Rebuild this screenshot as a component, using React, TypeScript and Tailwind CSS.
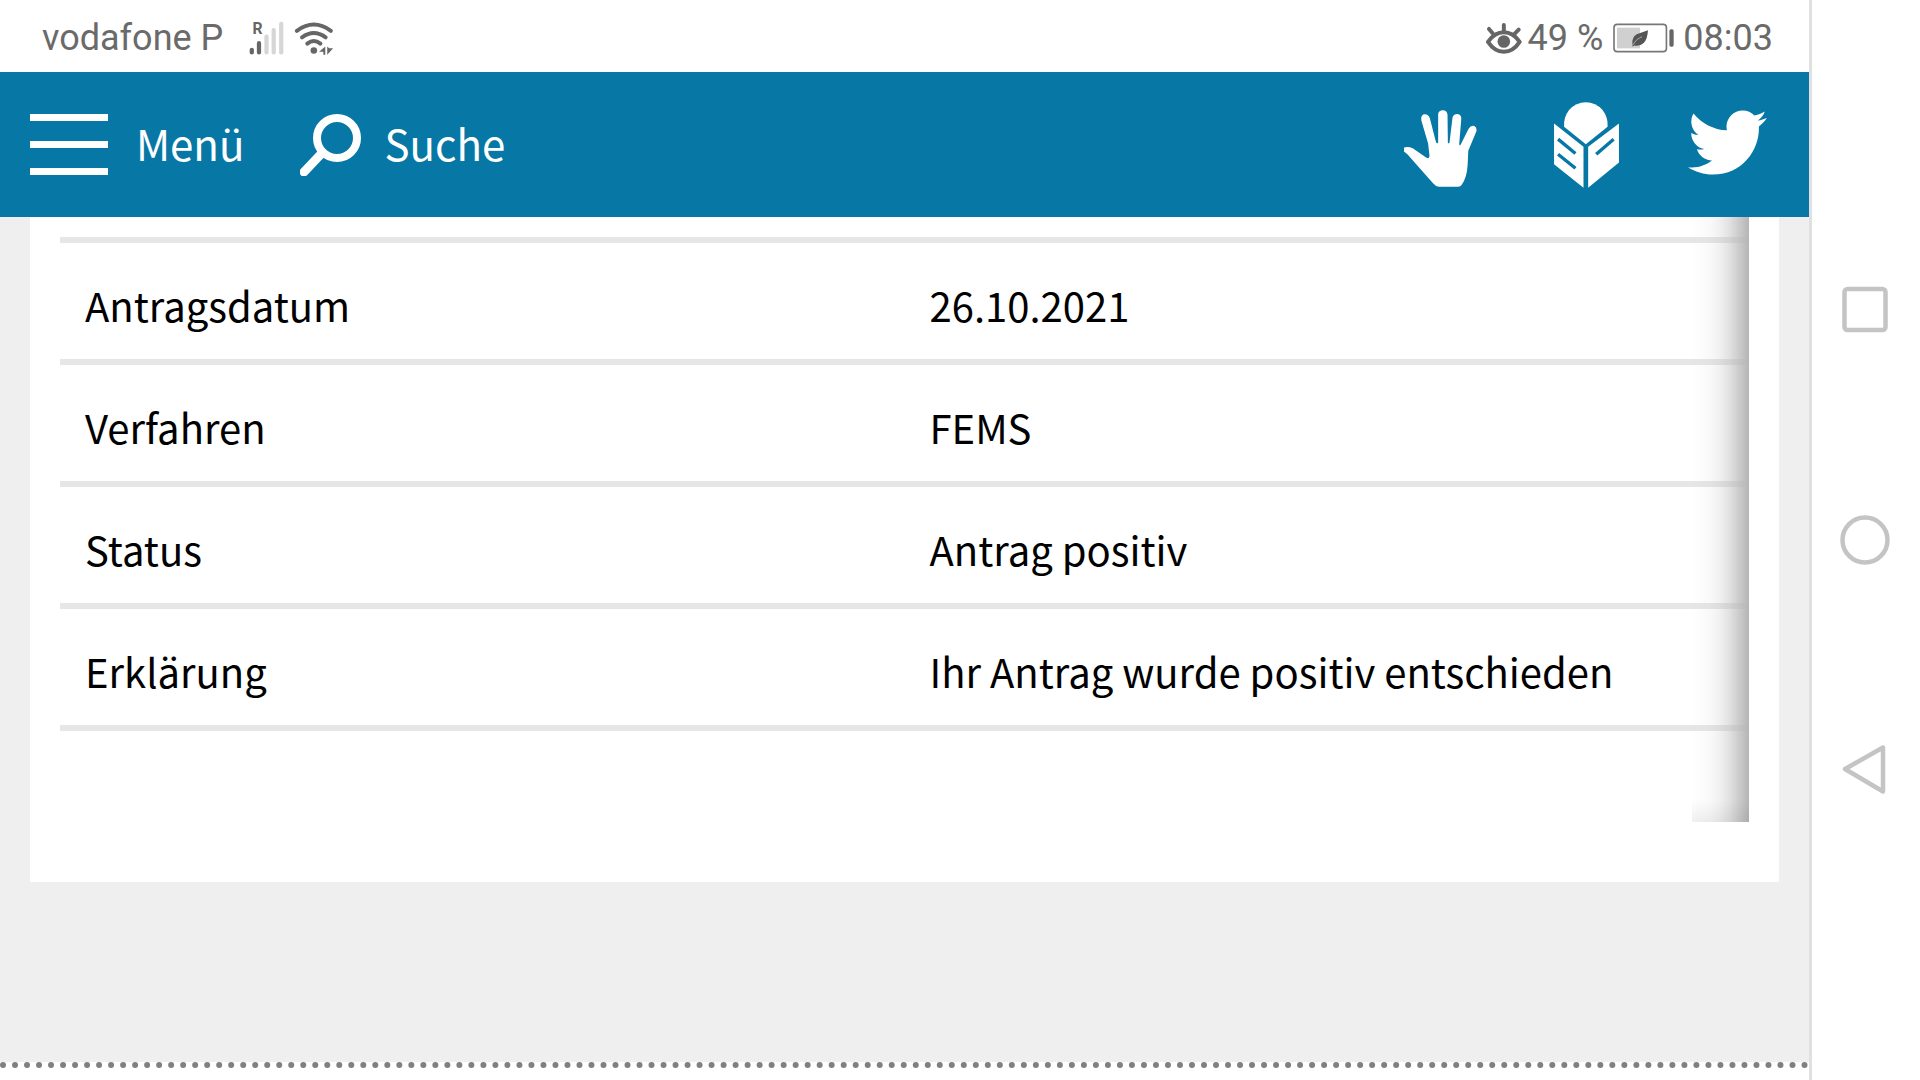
import React from 'react';
import { FaTwitter } from 'react-icons/fa';

interface Row {
  label: string;
  value: string;
}

const rows: Row[] = [
  { label: 'Antragsdatum', value: '26.10.2021' },
  { label: 'Verfahren', value: 'FEMS' },
  { label: 'Status', value: 'Antrag positiv' },
  { label: 'Erklärung', value: 'Ihr Antrag wurde positiv entschieden' },
];

function SignalIcon() {
  return (
    <svg viewBox="747 54 106 104" className="w-[35px] h-[34px] overflow-visible" strokeWidth="13" strokeLinecap="round" aria-hidden="true">
      <text x="757" y="93" fontSize="48" fontWeight="700" fill="#666" stroke="none">R</text>
      <path d="M755 142v8M777 122v28" stroke="#666" />
      <path d="M800 102v48M822 82v68M845 63v87" stroke="#d6d6d6" />
    </svg>
  );
}

function WifiIcon() {
  return (
    <svg viewBox="881 54 119 104" className="w-[40px] h-[34px]" fill="none" stroke="#666" strokeWidth="12" strokeLinecap="round" aria-hidden="true">
      <path d="M888 84Q940 46 992 84M904 104Q940 78 976 104M920 123Q940 108 960 123" />
      <circle cx="940" cy="144" r="10" fill="#666" stroke="none" />
      <path d="M956 148l19-16v25h-6v-9zM981 157v-25l6 5h12z" fill="#666" stroke="none" />
    </svg>
  );
}

function EyeIcon() {
  return (
    <svg viewBox="78 61 109 98" className="w-[36px] h-[33px]" fill="none" stroke="#666" strokeWidth="12" strokeLinecap="round" aria-hidden="true">
      <path d="M84 120Q104 91 132 91Q160 91 180 120Q160 150 132 150Q104 150 84 120Z" strokeWidth="12" strokeLinejoin="round" />
      <circle cx="132" cy="119" r="19" fill="#666" stroke="none" />
      <path d="M132 69v18M87 81l11 13M177 83l-12 12" />
    </svg>
  );
}

function BatteryIcon() {
  return (
    <svg viewBox="458 64 186 91" className="w-[62px] h-[30px]" aria-hidden="true">
      <rect x="460" y="68" width="159" height="83" rx="10" fill="none" stroke="#777" strokeWidth="5" />
      <rect x="469" y="78" width="70" height="63" fill="#d0d0d0" />
      <rect x="628" y="83" width="13" height="53" rx="5" fill="#666" />
      <path d="M563 86Q562 112 550 125Q538 136 521 132L516 136V128Q513 108 529 98Q546 92 563 86Z" fill="#555" />
      <path d="M517 131Q526 112 545 105" fill="none" stroke="#ccc" strokeWidth="2" />
    </svg>
  );
}

function SearchIcon() {
  return (
    <svg viewBox="0 0 61 62" className="w-[61px] h-[62px]" fill="none" stroke="white" aria-hidden="true">
      <circle cx="37" cy="24" r="20" strokeWidth="8" />
      <path d="M22 39L4 58" strokeWidth="9" strokeLinecap="round" />
    </svg>
  );
}

function HandIcon() {
  return (
    <svg viewBox="72 60 218 230" className="w-[73px] h-[77px]" fill="white" aria-hidden="true">
      <path d="M72 172Q84 168 98 174L138 202Q148 208 148 195L144 160L124 92Q121 74 134 73Q145 74 149 84L166 150Q169 162 174 158L174 72Q176 61 188 61Q200 61 202 74L203 158Q206 162 208 156L217 82Q220 72 232 72Q244 74 243 88L237 160Q237 172 243 160L265 116Q272 105 282 108Q291 113 288 124L264 182L262 225Q260 262 244 284Q241 289 234 289L176 289Q166 288 158 278L82 192Q74 186 72 184Z" />
    </svg>
  );
}

function ReaderIcon() {
  return (
    <svg viewBox="522 34 194 257" className="w-[65px] h-[86px]" fill="white" aria-hidden="true">
      <path d="M552 108Q550 80 567 58Q588 35 617 35Q646 35 667 58Q684 80 682 108L617 160Z" />
      <path d="M522 98L610 168V290L522 220ZM624 168L716 98V215L624 290Z" />
      <path d="M534 145L586 188M534 190L586 232M648 190L700 145" stroke="#0777a6" strokeWidth="10" />
    </svg>
  );
}

function StatusBar() {
  return (
    <div className="flex h-[72px] items-center justify-between bg-white pt-1 pr-9 pl-[42px] font-['Roboto',sans-serif] text-[36px] leading-10 text-[#6a6a6a]">
      <div className="flex items-center">
        <span>vodafone P</span>
        <span className="ml-[26px]"><SignalIcon /></span>
        <span className="ml-2.5"><WifiIcon /></span>
      </div>
      <div className="flex items-center">
        <EyeIcon />
        <span className="ml-1.5">49 %</span>
        <span className="ml-2.5"><BatteryIcon /></span>
        <span className="ml-2">08:03</span>
      </div>
    </div>
  );
}

function Header() {
  return (
    <header className="flex h-[145px] items-center justify-between bg-[#0777a6] pr-[42px] pl-[30px] text-[42px] leading-[60px] text-white">
      <nav className="flex items-center">
        <button type="button" className="flex items-center gap-7">
          <span className="flex w-[78px] flex-col gap-5">
            <span className="h-[7px] bg-white" />
            <span className="h-[7px] bg-white" />
            <span className="h-[7px] bg-white" />
          </span>
          <span className="pb-1">Menü</span>
        </button>
        <button type="button" className="ml-[55px] flex items-center gap-6">
          <SearchIcon />
          <span className="pb-1">Suche</span>
        </button>
      </nav>
      <div className="flex items-center">
        <a href="#gebaerdensprache" aria-label="Gebärdensprache" className="pt-2"><HandIcon /></a>
        <a href="#leichte-sprache" aria-label="Leichte Sprache" className="ml-[77px]"><ReaderIcon /></a>
        <a href="#twitter" aria-label="Twitter" className="ml-[69px] pb-1"><FaTwitter className="size-[79px]" /></a>
      </div>
    </header>
  );
}

function SystemNav() {
  return (
    <div className="flex w-[111px] shrink-0 flex-col items-center justify-center gap-[180px] border-l-[3px] border-[#e0e0e0] bg-white pr-0.5">
      <button type="button" aria-label="Übersicht">
        <svg viewBox="0 0 50 50" className="size-[50px]" fill="none" stroke="#c4c4c4" strokeWidth="4.5">
          <rect x="4.5" y="4" width="41" height="41" rx="3" />
        </svg>
      </button>
      <button type="button" aria-label="Startseite">
        <svg viewBox="0 0 50 50" className="size-[50px]" fill="none" stroke="#c4c4c4" strokeWidth="4.5">
          <circle cx="25" cy="25" r="22.5" />
        </svg>
      </button>
      <button type="button" aria-label="Zurück">
        <svg viewBox="0 0 50 50" className="size-[50px]" fill="none" stroke="#c4c4c4" strokeWidth="4.5" strokeLinejoin="round">
          <path d="M5 24L43 2.5V46.5Z" />
        </svg>
      </button>
    </div>
  );
}

export default function App() {
  return (
    <div className="flex min-h-screen bg-white font-['Noto_Sans_CJK_SC',sans-serif]">
      <div className="flex min-w-0 flex-1 flex-col">
        <StatusBar />
        <Header />
        <main className="bg-[#efefef] px-[30px] pb-[180px]">
          <div className="bg-white px-[30px] pb-[60px]">
            {/* scroll shadow on the right edge, slightly darker at its foot */}
            <div className="bg-[linear-gradient(to_top,#0000000f,#00000000_22px),linear-gradient(to_left,#b5b5b5,#c9c9c9_9px,#e0e0e0_19px,#f0f0f0_29px,#f9f9f9_39px,#fff_57px)] bg-[length:57px_100%] bg-right bg-no-repeat pt-5 pb-[91px]">
              <table className="w-full table-fixed border-collapse border-t-[6px] border-[#b8b8b859] text-[40px] leading-[60px] text-black">
                <tbody>
                  {rows.map((row) => (
                    <tr key={row.label} className="h-[122px] border-b-[6px] border-[#b8b8b859]">
                      <th scope="row" className="px-[25px] pt-2 text-left font-normal">{row.label}</th>
                      <td className="px-[25px] pt-2">{row.value}</td>
                    </tr>
                  ))}
                </tbody>
              </table>
            </div>
          </div>
        </main>
        <footer className="flex-1 border-t-[6px] border-dotted border-[#808080] bg-white" />
      </div>
      <SystemNav />
    </div>
  );
}
